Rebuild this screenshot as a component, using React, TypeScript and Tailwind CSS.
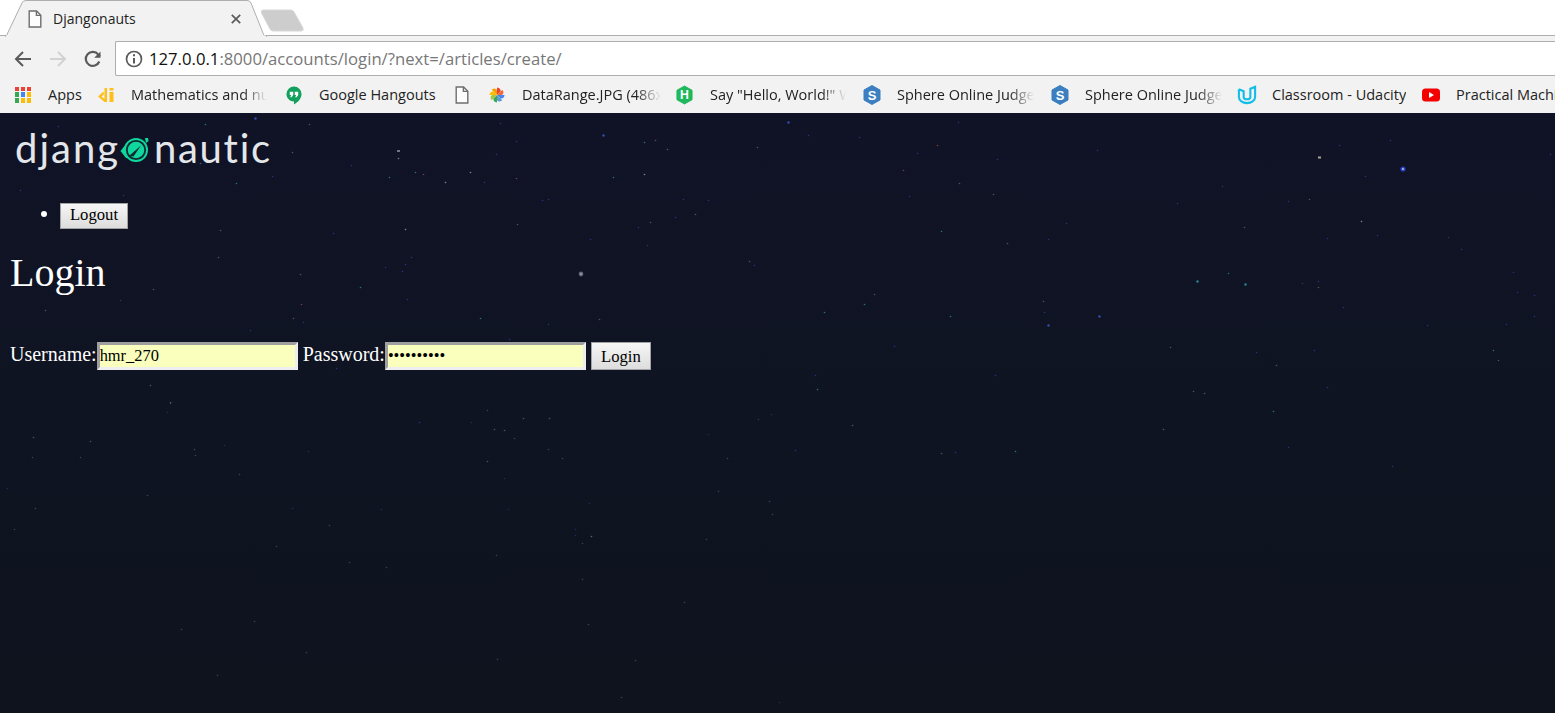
import React from "react";

type Star = [number, number, string?];
const z7: Star[] = [[248,111,"g"],[429,146,"w"],[366,172,"w"],[1234,20,"B"],[766,53,"B"],[871,70,"t"],[928,88,"t"],[897,67,"d"],[1156,83,"d"],[1414,58,"b"],[1284,52,"b"],[1526,141,"r"],[1560,98,"b"],[547,69,"b"],[497,101,"b"],[507,24,"b"],[24,25,"d"],[129,128,"b"],[225,159,"t"],[290,147,"t"],[312,152,"r"],[465,171,"b"],[547,161,"r"],[793,159,"t"],[871,152,"w"],[970,215,"b"],[1031,218,"b"],[1000,253,"d"],[948,260,"b"],[886,272,"d"],[854,285,"b"],[879,331,"b"],[612,217,"b"],[627,214,"b"],[548,279,"d"],[265,291,"w"],[83,301,"b"],[733,316,"b"],[1137,373,"d"],[1148,382,"b"],[280,362,"b"],[265,380,"b"],[214,387,"b"],[259,397,"b"],[153,437,"t"],[270,468,"b"],[2,481,"r"],[757,519,"d"],[456,515,"t"],[628,531,"b"],[528,570,"b"],[682,586,"t"],[282,583,"b"],[92,642,"b"],[1451,455,"r"],[1427,481,"t"],[1326,500,"t"],[1503,586,"b"],[1308,695,"t"],[1303,660,"b"],[1396,788,"d"],[564,770,"d"],[630,770,"d"],[302,778,"b"],[516,800,"d"],[490,797,"d"],[473,878,"d"],[1252,850,"b"],[1160,772,"b"],[1540,207,"b"]];
const z8: Star[] = [[59,21,"b"],[5,79,"R"],[156,114,"b"],[409,92,"b"],[60,174,"d"],[146,203,"d"],[14,295,"t"],[332,276,"b"],[285,317,"b"],[182,327,"d"],[1021,78,"b"],[1150,66,"b"],[1087,156,"b"],[945,215,"d"],[893,219,"b"],[725,183,"b"],[611,225,"b"],[782,286,"d"],[1077,271,"w"],[1117,307,"b"],[992,313,"b"],[1298,311,"b"],[1330,342,"b"],[1556,101,"b"],[664,423,"T"],[742,402,"t"],[784,429,"T"],[929,428,"b"],[968,423,"b"],[968,437,"d"],[273,473,"d"],[275,500,"b"],[415,511,"B"],[287,535,"B"],[39,511,"t"],[595,590,"d"],[811,601,"b"],[960,598,"b"],[863,635,"d"],[1031,488,"b"],[1245,535,"b"],[1472,451,"b"],[1516,458,"b"],[1516,511,"b"],[1444,531,"b"],[1411,597,"t"],[1425,623,"d"],[652,702,"d"],[681,706,"d"],[991,690,"b"],[854,751,"t"],[578,796,"t"],[893,842,"b"],[203,853,"t"],[14,857,"d"],[51,854,"b"],[151,661,"b"],[1157,890,"b"],[1462,400,"b"]];
const z11: Star[] = [[334,5,"d"],[327,24,"b"],[955,20,"d"],[924,44,"b"],[1007,74,"d"],[1075,96,"d"],[1101,114,"d"],[62,111,"d"],[156,111,"d"],[380,97,"t"],[382,107,"d"],[604,100,"b"],[439,88,"b"],[468,145,"d"],[14,173,"b"],[288,186,"d"],[69,212,"t"],[27,253,"d"],[572,212,"b"],[747,214,"b"],[996,214,"b"],[987,152,"b"],[1388,66,"b"],[1512,28,"b"],[1424,114,"d"],[1408,179,"d"],[1507,197,"d"],[1514,224,"d"],[1383,272,"d"],[1127,252,"b"],[1127,264,"b"],[1158,267,"w"],[1140,281,"d"],[1155,201,"b"],[645,245,"d"],[540,287,"d"],[685,317,"d"],[757,327,"d"],[973,303,"d"],[1140,351,"d"],[1341,395,"d"],[1153,440,"d"],[498,434,"d"],[354,449,"d"],[600,494,"d"],[425,539,"d"],[975,508,"d"],[1245,510,"d"],[1217,583,"d"],[1527,591,"b"],[785,624,"d"]];
const left: Star[] = [[255,118,"B"],[205,124,"t"],[236,183,"t"],[292,152,"d"],[200,163,"t"],[123,195,"b"],[272,176,"b"],[220,230,"d"],[218,257,"d"],[300,274,"d"],[153,289,"d"],[293,318,"d"],[303,322,"b"],[170,402,"d"],[33,437,"d"],[90,441,"d"],[58,126,"b"],[20,190,"b"],[120,300,"b"],[250,330,"b"],[45,310,"d"],[150,385,"d"]];
const colors: Record<string, string> = { b: "#2c3a86", B: "#3a56c4", t: "#33808c", T: "#2f96a8", d: "#5a5e6e", w: "#9a9aa6", g: "#70a890", r: "#7a4a5e", R: "#b03a3a" };

function Stars() {
  const top: Star[] = [
    ...z7.map(([x, y, c]) => [300 + x / 2.53, y / 2.53, c] as Star),
    ...z8.map(([x, y, c]) => [935 + x / 2.53, y / 2.53, c] as Star),
    ...left.map(([x, y, c]) => [x, y - 114, c] as Star),
  ];
  const low: Star[] = z11.map(([x, y, c]) => [x / 1.96, 286 + y / 1.96, c] as Star);
  const dot = ([x, y, c]: Star, i: number) => (
    <circle key={i} cx={Math.round(x) + 0.5} cy={Math.round(y) + 0.5} r={c === "B" || c === "T" ? 1.2 : 0.8} fill={colors[c ?? "d"]} />
  );
  return (
    <svg className="absolute inset-0 h-full w-full" viewBox="0 0 1555 599" preserveAspectRatio="none">
      <g opacity="0.85">{top.map(dot)}</g>
      <g opacity="0.6">{low.map(dot)}</g>
      <circle cx="581" cy="160" r="2.4" fill="#5c6072" />
      <circle cx="581" cy="160" r="1.2" fill="#8e92a0" />
      <circle cx="1403" cy="55" r="2.6" fill="#2a3fc0" />
      <circle cx="1403" cy="55" r="1.1" fill="#b8c0dc" />
      <rect x="1318" y="42.5" width="3" height="2" fill="#a8a890" />
      <rect x="397" y="36" width="3" height="2" fill="#70747f" />
    </svg>
  );
}

function FileIcon({ className }: { className?: string }) {
  return (
    <svg className={className} width="14" height="18" viewBox="0 0 14 18" fill="none" stroke="#6e6e6e" strokeWidth="1.4">
      <path d="M1.2 1h7.4l4.2 4.2v11.8H1.2z" fill="#fdfdfd" />
      <path d="M8.4 1v4.4h4.4" />
    </svg>
  );
}

function Mark({ w, children }: { w: number; children: React.ReactNode }) {
  return <div className="flex h-[20px] shrink-0 items-center justify-center" style={{ width: w }}>{children}</div>;
}

function Apps() {
  const c = ["#ea4335", "#ea4335", "#ea4335", "#34a853", "#4285f4", "#fbbc05", "#34a853", "#fbbc05", "#fbbc05"];
  return (
    <div className="grid h-[16px] w-[16px] grid-cols-3 gap-[1.6px]">
      {c.map((x, i) => <div key={i} style={{ background: x }} />)}
    </div>
  );
}

function Hex({ fill, letter }: { fill: string; letter: string }) {
  return (
    <svg width="18" height="20" viewBox="0 0 18 20">
      <path d="M9 .5 17 5v10l-8 4.5L1 15V5z" fill={fill} stroke={fill} strokeLinejoin="round" />
      <text x="9" y="14.5" textAnchor="middle" fontSize="13" fontWeight="700" fill="#fff" fontFamily="'Liberation Sans', sans-serif">{letter}</text>
    </svg>
  );
}

function Pinwheel() {
  const petals = ["#ea4335", "#f06a3a", "#4285f4", "#5b9bd5", "#34a853", "#a3c644", "#fbbc05", "#f4a300"];
  return (
    <svg width="18" height="18" viewBox="0 0 18 18">
      {petals.map((c, i) => (
        <path key={i} d="M9 9V1.500Q13 2 12.500 5.500z" fill={c} transform={`rotate(${i * 45} 9 9)`} />
      ))}
    </svg>
  );
}

function Bookmark({ icon, iconW, text, textW, gap, fade, after }: { icon: React.ReactNode; iconW: number; text?: string; textW?: number; gap?: number; fade?: boolean; after: number }) {
  return (
    <div className="flex shrink-0 items-center" style={{ marginRight: after }}>
      <Mark w={iconW}>{icon}</Mark>
      {text && (
        <div
          className={fade ? "overflow-hidden whitespace-nowrap [mask-image:linear-gradient(to_right,#000_82%,transparent_100%)]" : "overflow-hidden whitespace-nowrap"}
          style={{ width: textW, marginLeft: gap }}
        >
          {text}
        </div>
      )}
    </div>
  );
}

function LogoMark() {
  return (
    <svg width="32" height="26" viewBox="0 0 32 26" className="mt-[13px] shrink-0">
      <path d="M0.500 14 6 7h14v14H6z" fill="#10d79e" />
      <path d="M25 1h3l.6 3-2.600 2z" fill="#10d79e" />
      <circle cx="16" cy="13" r="12" fill="#10d79e" />
      <circle cx="16" cy="13" r="9.200" fill="#10d79e" stroke="#0f2a32" strokeWidth="1.800" />
      <path d="M9 19 21 8.500l-7.500 11z" fill="#0f2a32" />
    </svg>
  );
}

const fieldClass =
  "h-[28px] w-[201px] border-[3px] border-t-[#9f9f9f] border-r-[#eeeeee] border-b-[#eeeeee] border-l-[#9f9f9f] bg-[#faffbd] text-[16.4px] text-black outline-none";

export default function App() {
  return (
    <div className="flex h-[713px] w-full flex-col overflow-hidden bg-white font-['Liberation_Serif',serif]">
      <header className="shrink-0 font-['Open_Sans',sans-serif] text-[14.5px] text-[#222]">
        <div className="relative h-[36px] border-b border-[#aeaeae] bg-white">
          <svg className="absolute left-[5px] top-0" width="262" height="37" viewBox="0 0 262 37">
            <path d="M0 35.500h1.500L17 3q1-2.500 4-2.500h221q3 0 4 2.500l13 32.500h3V37H0z" fill="#f2f2f2" stroke="#aeaeae" />
            <path d="M1 36.500h260" stroke="#f2f2f2" strokeWidth="2" />
          </svg>
          <FileIcon className="absolute left-[28px] top-[10px]" />
          <span className="absolute left-[53px] top-[9px] text-[14px] leading-[20px]">Djangonauts</span>
          <svg className="absolute left-[231px] top-[14px]" width="10" height="10" viewBox="0 0 10 10" stroke="#5a5a5a" strokeWidth="1.700">
            <path d="m.8.8 8.400 8.400M9.200.8.8 9.200" />
          </svg>
          <svg className="absolute left-[260px] top-[8px]" width="45" height="24" viewBox="0 0 45 24">
            <path d="M3 2h28q2 0 3 2l9 16q1 3-2 3H13q-2 0-3-2L1.500 5Q.5 2 3 2z" fill="#cdcdcd" stroke="#d8d8d8" />
          </svg>
        </div>
        <div className="flex h-[40px] items-start bg-[#f2f2f2] pt-[5px]">
          <div className="flex h-[35px] w-[115px] shrink-0 items-center pl-[13px]">
            <svg width="20" height="20" viewBox="0 0 20 20" fill="none" stroke="#5a5a5a" strokeWidth="2">
              <path d="M18 10H3M10 3l-7 7 7 7" />
            </svg>
            <svg className="ml-[15px]" width="20" height="20" viewBox="0 0 20 20" fill="none" stroke="#d2d2d2" strokeWidth="2">
              <path d="M2 10h15M10 3l7 7-7 7" />
            </svg>
            <svg className="ml-[15px]" width="20" height="20" viewBox="0 0 20 20" fill="none" stroke="#5a5a5a" strokeWidth="2.200">
              <path d="M16.300 12.500A7 7 0 1 1 15.300 5.600L17 7.500" />
              <path d="M17.500 2.500V8.800H11.200z" fill="#5a5a5a" stroke="none" />
            </svg>
          </div>
          <div className="flex h-[35px] flex-1 items-center rounded-l-[2px] border border-r-0 border-[#aeaeae] bg-white pl-[9px] text-[16.7px]">
            <svg width="18" height="18" viewBox="0 0 18 18" fill="none" stroke="#5a5a5a" strokeWidth="1.700">
              <circle cx="9" cy="9" r="7.500" />
              <path d="M9 8v5.500" strokeWidth="2" />
              <path d="M9 4.300v2" strokeWidth="2" />
            </svg>
            <span className="ml-[6px] whitespace-nowrap leading-[20px] text-[#111]">
              127.0.0.1<span className="text-[#777]">:8000/accounts/login/?next=/articles/create/</span>
            </span>
          </div>
        </div>
        <div className="flex h-[38px] items-center overflow-hidden border-b-[1px] border-[#10142a] bg-[#f2f2f2] pl-[14px] leading-[20px]">
          <Bookmark icon={<Apps />} iconW={18} text="Apps" textW={40} gap={16} after={9} />
          <Bookmark
            iconW={20}
            icon={
              <svg width="18" height="14" viewBox="0 0 18 14" fill="#ffbe1a">
                <path d="M9 0v14H6.500L0 8.500 5.500 3.500 6 6.500 3.500 8.500 6.500 11V0z" />
                <path d="M11.500 0h4v2.500h-4zM11.500 4h4v10h-4z" />
              </svg>
            }
            text="Mathematics and nu"
            textW={136}
            gap={14}
            fade
            after={19}
          />
          <Bookmark
            iconW={16}
            icon={
              <svg width="17" height="20" viewBox="0 0 17 20">
                <path d="M8.500 1a8 8 0 0 0-8 8c0 4.400 3.600 8 8 8v3c4-2 8-6 8-11a8 8 0 0 0-8-8z" fill="#12a05c" />
                <path d="M4 6.500h3.700v3.500L6 12.500H4.500L5.500 10H4zM9.300 6.500H13V10l-1.700 2.500H9.800l1-2.500H9.300z" fill="#fff" />
              </svg>
            }
            text="Google Hangouts"
            textW={118}
            gap={17}
            after={18}
          />
          <Bookmark iconW={14} icon={<FileIcon />} after={19} />
          <Bookmark iconW={18} icon={<Pinwheel />} text="DataRange.JPG (486x" textW={139} gap={16} fade after={15} />
          <Bookmark iconW={17} icon={<Hex fill="#1fb85c" letter="H" />} text={'Say "Hello, World!" Web'} textW={136} gap={17} fade after={17} />
          <Bookmark iconW={18} icon={<Hex fill="#3b7fc0" letter="S" />} text="Sphere Online Judge" textW={137} gap={16} fade after={17} />
          <Bookmark iconW={18} icon={<Hex fill="#3b7fc0" letter="S" />} text="Sphere Online Judge" textW={137} gap={16} fade after={15} />
          <Bookmark
            iconW={20}
            icon={
              <svg width="21" height="20" viewBox="0 0 21 20" fill="none" stroke="#12bde8" strokeWidth="2.200">
                <path d="M2 4v8c0 4 4 6.500 8.500 6.500s8.500-2.500 8.500-6.500V1.500L14 3.500v8.500c0 1.500-1 2.500-3.500 2.500" />
                <path d="M2 4l5 2v6c0 1.500 1 2.500 3.500 2.500" />
              </svg>
            }
            text="Classroom - Udacity"
            textW={134}
            gap={15}
            after={16}
          />
          <Bookmark
            iconW={18}
            icon={
              <svg width="18" height="14" viewBox="0 0 18 14">
                <rect width="18" height="13" y=".5" rx="3.500" fill="#f40000" />
                <path d="M7 4v6l5-3z" fill="#fff" />
              </svg>
            }
            text="Practical Machine Learning"
            textW={100}
            gap={16}
            after={0}
          />
        </div>
      </header>

      <main className="relative flex-1 bg-gradient-to-b from-[#101326] via-[#0f1422] to-[#0e131e] text-[20px] leading-[23px] text-white">
        <Stars />
        <div className="relative px-[10px]">
          <div className="flex h-[70px] items-start pl-[5px] pt-[10px] font-['Lato',sans-serif] text-[40px] leading-[48px] tracking-[2px] text-[#e4e7ea]">
            <span>djang</span>
            <LogoMark />
            <span className="ml-[2px] tracking-[1.7px]">nautic</span>
          </div>
          <ul className="mt-[19px] list-disc pl-[50px]">
            <li className="leading-[21px]">
              <button className="h-[26px] w-[68px] border border-[#a2a2a2] bg-gradient-to-b from-[#f6f6f6] to-[#dddddd] pb-[2px] text-[16.67px] leading-[20px] text-black">Logout</button>
            </li>
          </ul>
          <h1 className="mt-[21px] text-[40px] font-normal leading-[46px]">Login</h1>
          <form className="mt-[46px] flex items-center">
            <label className="pb-[3px]">Username:</label>
            <input readOnly value="hmr_270" className={fieldClass} />
            <label className="ml-[5px] pb-[3px]">Password:</label>
            <input readOnly type="password" value="0123456789" className={fieldClass} />
            <button type="button" className="ml-[5px] h-[28px] w-[60px] border border-[#a2a2a2] bg-gradient-to-b from-[#f6f6f6] to-[#dddddd] pt-[1px] text-[16.67px] leading-[20px] text-black">Login</button>
          </form>
        </div>
      </main>
    </div>
  );
}
